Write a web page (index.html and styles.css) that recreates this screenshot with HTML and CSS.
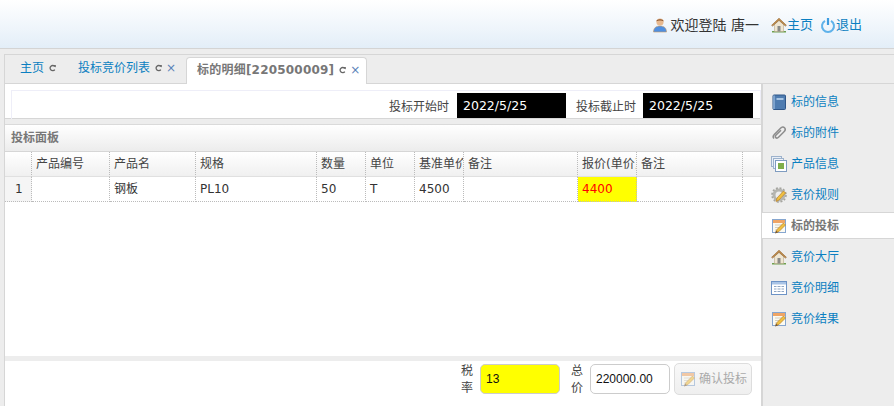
FILE: index.html
```html
<!DOCTYPE html>
<html lang="zh-CN">
<head>
<meta charset="utf-8">
<title>标的明细</title>
<link rel="stylesheet" href="styles.css">
</head>
<body>
<svg class="defs" width="0" height="0" aria-hidden="true">
  <defs>
    <symbol id="i-home" viewBox="0 0 16 16">
      <path d="M1 15.500h14v-1.500H1z" fill="#6fa04e"/>
      <path d="M3.500 7.500V14.500h9V7.500L8 3.500z" fill="#efe6d2" stroke="#b9a98c" stroke-width=".6"/>
      <path d="M6.500 9h3v5.500h-3z" fill="#8a8a86"/>
      <path d="M.6 8.300 8 1.200l7.400 7.100-1 .8L8 3.200 1.600 9.100z" fill="#c08d4e" stroke="#94662f" stroke-width=".6"/>
    </symbol>
    <symbol id="i-note" viewBox="0 0 16 16">
      <rect x="1.500" y="1.500" width="13" height="13" fill="#fbfaf2" stroke="#86a6cf"/>
      <rect x="2" y="2" width="12" height="3" fill="#efa565"/>
      <path d="M4 7h8M4 9.500h5M4 12h3" stroke="#d4cfc0"/>
      <path d="M5 14.500 6 11.500 12.500 5l2 2L8 13.500z" fill="#f0c040" stroke="#b9812a" stroke-width=".7"/>
      <path d="M4 15.400l1-3 2 2z" fill="#7a5a30"/>
    </symbol>
    <symbol id="i-refresh" viewBox="0 0 7 8">
      <path d="M5.800 2.600A2.600 2.600 0 1 0 5.800 5.600" fill="none" stroke="#666" stroke-width="1.300"/>
      <path d="M4.300 1h2.500v2.600z" fill="#666"/>
    </symbol>
  </defs>
</svg>

<header class="topbar">
  <svg class="icon" viewBox="0 0 16 16"><circle cx="8" cy="5" r="3.600" fill="#e8b98f"/><path d="M4.300 4.500C4.300 1.500 11.700 1.500 11.700 4.500 10 3.200 6 3.200 4.300 4.500z" fill="#8a5228"/><path d="M1.500 15c0-4 2.500-6 6.500-6s6.500 2 6.500 6z" fill="#4f8fe0" stroke="#c99a66" stroke-width=".6"/></svg>
  <span class="welcome">欢迎登陆 唐一</span>
  <a class="toplink"><svg class="icon"><use href="#i-home"/></svg>主页</a>
  <a class="toplink"><svg class="icon" viewBox="0 0 16 16"><path d="M5 3.800a6 6 0 1 0 6 0" fill="none" stroke="#5fb2ea" stroke-width="2"/><path d="M8 1v7" stroke="#3d9ce0" stroke-width="2.200"/></svg>退出</a>
</header>

<div class="workspace">
  <nav class="tabs">
    <div class="tab"><a>主页</a><svg class="refresh"><use href="#i-refresh"/></svg></div>
    <div class="tab"><a>投标竞价列表</a><svg class="refresh"><use href="#i-refresh"/></svg><span class="close">×</span></div>
    <div class="tab active"><a>标的明细[220500009]</a><svg class="refresh"><use href="#i-refresh"/></svg><span class="close">×</span></div>
  </nav>

  <div class="content">
    <main class="main">
      <section class="dates">
        <div class="dates-inner">
          <span class="date-label">投标开始时</span><span class="date-value date-a">2022/5/25</span>
          <span class="date-label">投标截止时</span><span class="date-value date-b">2022/5/25</span>
        </div>
      </section>

      <section class="panel">
        <h2 class="panel-title">投标面板</h2>
        <div class="grid-wrap">
          <table class="grid">
            <colgroup>
              <col class="c0"><col class="c1"><col class="c2"><col class="c3"><col class="c4"><col class="c5"><col class="c6"><col class="c7"><col class="c8"><col class="c9"><col class="c10">
            </colgroup>
            <thead>
              <tr><th></th><th>产品编号</th><th>产品名</th><th>规格</th><th>数量</th><th>单位</th><th>基准单价</th><th>备注</th><th>报价(单价)</th><th>备注</th><th class="filler"></th></tr>
            </thead>
            <tbody>
              <tr><td class="rownum">1</td><td></td><td>钢板</td><td>PL10</td><td>50</td><td>T</td><td>4500</td><td></td><td class="quote">4400</td><td></td><td class="filler"></td></tr>
            </tbody>
          </table>
        </div>
        <div class="panel-foot">
          <label class="foot-label">税率</label>
          <div class="field yellow">13</div>
          <label class="foot-label foot-label-b">总价</label>
          <div class="field total">220000.00</div>
          <button class="submit" type="button"><svg class="icon faded"><use href="#i-note"/></svg>确认投标</button>
        </div>
      </section>
    </main>

    <aside class="side">
      <a class="side-item"><svg class="icon" viewBox="0 0 16 16"><rect x="2" y="1" width="12.500" height="14.500" rx="1" fill="#4f7cb0" stroke="#2f5688"/><path d="M3 1.500v13.500" stroke="#8fb2d8" stroke-width="1.500"/><path d="M5.500 4h7v2h-7z" fill="#a9c6e4"/></svg>标的信息</a>
      <a class="side-item"><svg class="icon" viewBox="0 0 16 16"><path d="M3 13.500c-1.500-1.500-.8-3 .5-4.300L9.500 3.300c1.500-1.500 3-1.500 4 -.5s1 2.500-.5 4L7.500 12.300c-1 1-2 1-2.700.3s-.6-1.700.3-2.600L10 5.200" fill="none" stroke="#8d8d8d" stroke-width="1.500"/></svg>标的附件</a>
      <a class="side-item"><svg class="icon" viewBox="0 0 16 16"><rect x=".5" y=".5" width="10" height="10" fill="#e8eef6" stroke="#9db2cc"/><rect x="2.500" y="2.500" width="10" height="10" fill="#eef2f8" stroke="#9db2cc"/><rect x="4.500" y="4.500" width="11" height="11" fill="#fff" stroke="#7f9cc0"/><rect x="7" y="7" width="6" height="6" fill="#7fae4a"/></svg>产品信息</a>
      <a class="side-item"><svg class="icon" viewBox="0 0 16 16"><circle cx="8" cy="8" r="5" fill="none" stroke="#b5b5b0" stroke-width="3"/><circle cx="8" cy="8" r="7" fill="none" stroke="#a5a5a0" stroke-width="1.600" stroke-dasharray="2 1.700"/><path d="M5 14.500 6 11l6.500-7 2 2L8 13z" fill="#f0c040" stroke="#b9812a" stroke-width=".7"/></svg>竞价规则</a>
      <a class="side-item current"><svg class="icon"><use href="#i-note"/></svg>标的投标</a>
      <a class="side-item"><svg class="icon"><use href="#i-home"/></svg>竞价大厅</a>
      <a class="side-item"><svg class="icon" viewBox="0 0 16 16"><rect x=".5" y="1.500" width="15" height="13" fill="#fff" stroke="#6d93c6"/><rect x="1" y="2" width="14" height="2.500" fill="#a9c4e6"/><path d="M3 6.500h10M3 9h10M3 11.500h10" stroke="#8fa6c4"/><path d="M6 5v8M10 5v8" stroke="#fff"/></svg>竞价明细</a>
      <a class="side-item"><svg class="icon"><use href="#i-note"/></svg>竞价结果</a>
    </aside>
  </div>
</div>
</body>
</html>
```

FILE: styles.css
```css
* { box-sizing: border-box; }
html, body { margin: 0; height: 100%; overflow: hidden; }
body {
  width: 894px;
  height: 406px;
  background: #ededed;
  color: #333;
  font: 12px/16px "DejaVu Sans", "Noto Sans CJK SC", sans-serif;
  display: flex;
  flex-direction: column;
}
.defs { position: absolute; }
.icon { width: 16px; height: 16px; flex: none; display: block; }
.faded { opacity: .55; }

.topbar {
  height: 49px;
  flex: none;
  display: flex;
  align-items: center;
  justify-content: flex-end;
  padding: 2px 32px 0 0;
  background: linear-gradient(#fff, #e3eef8);
  border-bottom: 1px solid #d4d4d4;
  font-size: 13px;
}
.welcome { margin: 0 12px 0 3px; font-size: 14px; }
.toplink { display: flex; align-items: center; color: #0b7fc1; }
.toplink + .toplink { margin-left: 7px; }

.workspace {
  flex: 1;
  margin: 5px 0 0 4px;
  display: flex;
  flex-direction: column;
  min-height: 0;
  border-top: 1px solid #d6d6d6;
  border-left: 1px solid #d6d6d6;
}
.tabs {
  height: 29px;
  flex: none;
  display: flex;
  align-items: flex-end;
  padding-left: 1px;
  gap: 1px;
  border-bottom: 1px solid #d6d6d6;
}
.tab {
  height: 27px;
  display: flex;
  align-items: center;
  padding: 0 10px 3px 14px;
  color: #0b7fc1;
}
.tab:nth-child(2) { padding-left: 11px; padding-right: 9px; }
.tab.active {
  height: 27px;
  margin-bottom: -1px;
  padding: 0 6px 2px 10px;
  background: #fff;
  border: 1px solid #d6d6d6;
  border-bottom: 0;
  border-radius: 4px 4px 0 0;
  color: #777;
  font-weight: bold;
  letter-spacing: .2px;
}
.refresh { width: 7px; height: 8px; flex: none; margin-left: 5px; }
.close { margin-left: 4px; color: #5a82b8; font-size: 12px; font-weight: normal; }

.content { flex: 1; display: flex; min-height: 0; }
.main {
  width: 756px;
  flex: none;
  display: flex;
  flex-direction: column;
  min-height: 0;
}
.dates {
  height: 35px;
  flex: none;
  padding: 6px 0 0 6px;
  background: #fff;
  border-bottom: 1px solid #d6d6d6;
}
.dates-inner {
  height: 29px;
  display: flex;
  align-items: flex-start;
  padding: 2px 0 0 376px;
  border: 1px solid #eeeef8;
  border-bottom: 0;
}
.date-label { width: 69px; line-height: 25px; flex: none; padding: 2px 0 0 1px; white-space: nowrap; font-size: 12px; color: #444; }
.date-value {
  height: 25px;
  flex: none;
  background: #000;
  color: #fff;
  line-height: 25px;
  padding-left: 6px;
  font-size: 12.500px;
}
.date-a { width: 109px; margin-right: 9px; }
.date-b { width: 110px; }
.date-label:nth-of-type(3) { width: 68px; }

.panel {
  flex: 1;
  margin-top: 5px;
  display: flex;
  flex-direction: column;
  min-height: 0;
  background: #fff;
  border-top: 1px solid #dadada;
}
.panel-title {
  height: 27px;
  flex: none;
  margin: 0;
  padding-left: 6px;
  font-size: 12px;
  line-height: 26px;
  font-weight: bold;
  color: #777;
  background: linear-gradient(#fff, #ececec);
  border-bottom: 1px solid #d6d6d6;
}
.grid-wrap { flex: 1; min-height: 0; border-bottom: 5px solid #ededed; }
.grid { table-layout: fixed; border-collapse: separate; border-spacing: 0; width: 756px; }
.c0 { width: 27px; } .c1 { width: 78px; } .c2 { width: 86px; } .c3 { width: 121px; } .c4 { width: 49px; }
.c5 { width: 49px; } .c6 { width: 49px; } .c7 { width: 114px; } .c8 { width: 59px; } .c9 { width: 106px; } .c10 { width: 18px; }
.grid th, .grid td {
  padding: 0 0 0 4px;
  overflow: hidden;
  white-space: nowrap;
  text-align: left;
  font-weight: normal;
  border-right: 1px dotted #bbb;
}
.grid th {
  height: 25px;
  background: linear-gradient(#fff, #f0f0f0);
  border-bottom: 1px solid #e0e0e0;
  color: #444;
}
.grid td {
  height: 25px;
  border-bottom: 1px dotted #bbb;
  color: #333;
}
.grid .rownum { background: #f5f5f5; padding-left: 10px; }
.grid .quote { background: #ff0; color: #f00; }
.grid .filler { border-right: 0; }
.grid td.filler { border-bottom: 0; }

.panel-foot {
  height: 45px;
  flex: none;
  display: flex;
  align-items: flex-start;
  padding: 3px 0 0 456px;
}
.foot-label { width: 12px; line-height: 17px; color: #444; margin: -1px 7px 0 0; font-size: 12px; }
.field {
  height: 30px;
  width: 80px;
  padding-left: 5px;
  line-height: 28px;
  border: 1px solid #ccc;
  border-radius: 5px;
  color: #111;
  font-family: "Liberation Sans", "Noto Sans CJK SC", sans-serif;
}
.yellow { background: #ff0; }
.foot-label-b { margin-left: 11px; }
.total { margin-right: 4px; }
.submit {
  width: 78px;
  height: 32px;
  margin-top: -1px;
  padding: 0 0 0 5px;
  display: flex;
  align-items: center;
  gap: 3px;
  background: linear-gradient(#f8f8f8, #efefef);
  border: 1px solid #ddd;
  border-radius: 5px;
  color: #aaa;
  font: inherit;
}

.side {
  flex: 1;
  border-left: 2px solid #d6d6d6;
  padding-top: 2px;
  display: flex;
  flex-direction: column;
}
.side-item {
  height: 31px;
  display: flex;
  align-items: center;
  gap: 4px;
  padding-left: 8px;
  color: #0b7fc1;
}
.side-item.current {
  height: 27px;
  margin: 2px 0 2px -1px;
  padding-left: 9px;
  background: #fff;
  border-top: 1px solid #d6d6d6;
  border-bottom: 1px solid #d6d6d6;
  color: #777;
  font-weight: bold;
}
```
